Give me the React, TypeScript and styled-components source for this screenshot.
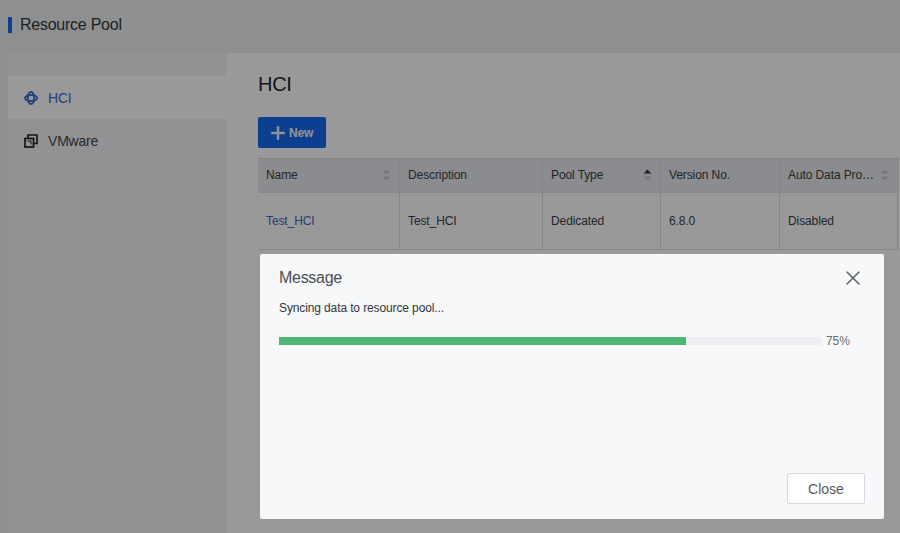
import React from 'react';
import styled, { createGlobalStyle } from 'styled-components';
import { Plus, X } from 'lucide-react';

const Global = createGlobalStyle`
  html, body {
    margin: 0;
    padding: 0;
    height: 100%;
    overflow: hidden;
    font-family: "Liberation Sans", Arial, sans-serif;
  }
  * { box-sizing: border-box; }
`;

const Page = styled.div`
  position: relative;
  width: 900px;
  height: 533px;
  background: #eceef2;
  display: flex;
  flex-direction: column;
  overflow: hidden;
`;

const Header = styled.div`
  height: 53px;
  flex: none;
  padding: 17px 0 0 8px;
  display: flex;
  align-items: flex-start;
  gap: 8px;
`;

const HeaderMark = styled.span`
  width: 4px;
  height: 16px;
  background: #1469f0;
`;

const HeaderTitle = styled.h1`
  margin: -1px 0 0;
  font-size: 16px;
  line-height: 18px;
  font-weight: 400;
  letter-spacing: -0.25px;
  color: #33363b;
`;

const Body = styled.div`
  flex: 1;
  display: flex;
  padding-left: 8px;
  min-height: 0;
`;

const Sidebar = styled.nav`
  width: 218px;
  flex: none;
  padding-top: 23px;
  background: #f3f4f7;
`;

const NavItem = styled.div<{ $active?: boolean }>`
  height: 43px;
  display: flex;
  align-items: center;
  gap: 10px;
  padding-left: 16px;
  font-size: 14px;
  letter-spacing: -0.2px;
  background: ${p => (p.$active ? '#fff' : 'transparent')};
  color: ${p => (p.$active ? '#3a6cd8' : '#44474d')};
`;

const Content = styled.main`
  flex: 1;
  min-width: 0;
  background: #fff;
  padding: 20px 0 0 32px;
`;

const Heading = styled.h2`
  margin: 0;
  font-size: 20px;
  line-height: 23px;
  font-weight: 400;
  letter-spacing: -0.3px;
  color: #23262b;
`;

const NewButton = styled.button`
  margin-top: 21px;
  width: 68px;
  height: 31px;
  border: 0;
  border-radius: 2px;
  background: #1469f0;
  color: #f3f6fb;
  font: 700 12px "Liberation Sans", Arial, sans-serif;
  letter-spacing: -0.2px;
  display: flex;
  align-items: center;
  justify-content: center;
  gap: 1px;
  padding: 0 3px 0 0;
`;

const Table = styled.div`
  margin-top: 10px;
  width: 641px;
  border-top: 1px solid #d8dae0;
  font-size: 12px;
  letter-spacing: -0.1px;
`;

const Row = styled.div<{ $head?: boolean }>`
  display: grid;
  grid-template-columns: 142px 143px 118px 119px 118px 1px;
  height: ${p => (p.$head ? '34px' : '57px')};
  background: ${p => (p.$head ? '#e8eaee' : '#fff')};
  border-bottom: 1px solid #e0e2e7;
`;

const Cell = styled.div<{ $link?: boolean }>`
  display: flex;
  align-items: center;
  justify-content: space-between;
  padding: 0 8px 1px;
  border-right: 1px solid #dcdee4;
  color: ${p => (p.$link ? '#4660cc' : '#3a3d43')};
  white-space: nowrap;
  overflow: hidden;
`;

const Sort = styled.svg`
  flex: none;
  width: 9px;
  height: 12px;
`;

const SortIcon: React.FC<{ up?: boolean }> = ({ up }) => (
  <Sort viewBox="0 0 9 12">
    <path d="M4.5 0.5 L8.5 4.5 H0.5 Z" fill={up ? '#33363b' : '#c4c7cd'} />
    <path d="M4.5 11.5 L8.5 7.5 H0.5 Z" fill="#c4c7cd" />
  </Sort>
);

const Overlay = styled.div`
  position: absolute;
  inset: 0;
  background: rgba(0, 0, 0, 0.4);
`;

const Dialog = styled.div`
  position: absolute;
  left: 260px;
  top: 254px;
  width: 624px;
  height: 265px;
  background: #f7f8fa;
  border-radius: 2px;
  padding: 15px 19px 15px;
  display: flex;
  flex-direction: column;
`;

const DialogHead = styled.div`
  display: flex;
  align-items: center;
  justify-content: space-between;
  height: 18px;
`;

const DialogTitle = styled.div`
  font-size: 16px;
  line-height: 18px;
  letter-spacing: -0.3px;
  color: #4a4d53;
`;

const CloseIcon = styled.span`
  display: flex;
  color: #5d6066;
`;

const Status = styled.div`
  margin-top: 14px;
  font-size: 12px;
  line-height: 14px;
  letter-spacing: -0.12px;
  color: #33363b;
`;

const ProgressRow = styled.div`
  margin-top: 19px;
  display: flex;
  align-items: center;
  gap: 5px;
`;

const Track = styled.div`
  width: 542px;
  height: 8px;
  background: #eceef1;
`;

const Fill = styled.div`
  height: 100%;
  background: #4fb573;
`;

const Percent = styled.span`
  font-size: 12px;
  letter-spacing: -0.1px;
  color: #6b6e74;
`;

const Footer = styled.div`
  margin-top: auto;
  display: flex;
  justify-content: flex-end;
`;

const CloseButton = styled.button`
  width: 78px;
  height: 31px;
  background: #fff;
  border: 1px solid #d5d8df;
  border-radius: 2px;
  font: 14px "Liberation Sans", Arial, sans-serif;
  color: #555a62;
  padding: 0;
`;

const HciIcon = () => (
  <svg width="14" height="14" viewBox="0 0 14 14" fill="none" stroke="#3a6cd8" strokeWidth="1.9">
    <ellipse cx="7" cy="7" rx="3.2" ry="6" />
    <ellipse cx="7" cy="7" rx="6" ry="3" />
  </svg>
);

const VmwareIcon = () => (
  <svg width="14" height="14" viewBox="0 0 14 14" fill="none" stroke="#1f2124" strokeWidth="1.7">
    <rect x="1" y="4.5" width="8.5" height="8.5" />
    <path d="M4 4.5 V1 H13 V9.5 H9.5" />
    <path d="M3.5 7 H7 V10.5" strokeWidth="1" />
  </svg>
);

export default function App() {
  const progress = 75;

  return (
    <Page>
      <Global />
      <Header>
        <HeaderMark />
        <HeaderTitle>Resource Pool</HeaderTitle>
      </Header>
      <Body>
        <Sidebar>
          <NavItem $active>
            <HciIcon />
            HCI
          </NavItem>
          <NavItem>
            <VmwareIcon />
            VMware
          </NavItem>
        </Sidebar>
        <Content>
          <Heading>HCI</Heading>
          <NewButton>
            <Plus size={20} strokeWidth={3} />
            New
          </NewButton>
          <Table>
            <Row $head>
              <Cell>Name<SortIcon /></Cell>
              <Cell>Description</Cell>
              <Cell>Pool Type<SortIcon up /></Cell>
              <Cell>Version No.</Cell>
              <Cell>Auto Data Pro…<SortIcon /></Cell>
            </Row>
            <Row>
              <Cell $link>Test_HCI</Cell>
              <Cell>Test_HCI</Cell>
              <Cell>Dedicated</Cell>
              <Cell>6.8.0</Cell>
              <Cell>Disabled</Cell>
            </Row>
          </Table>
        </Content>
      </Body>
      <Overlay />
      <Dialog>
        <DialogHead>
          <DialogTitle>Message</DialogTitle>
          <CloseIcon><X size={24} strokeWidth={1.5} /></CloseIcon>
        </DialogHead>
        <Status>Syncing data to resource pool...</Status>
        <ProgressRow>
          <Track>
            <Fill style={{ width: `${progress}%` }} />
          </Track>
          <Percent>{progress}%</Percent>
        </ProgressRow>
        <Footer>
          <CloseButton>Close</CloseButton>
        </Footer>
      </Dialog>
    </Page>
  );
}
